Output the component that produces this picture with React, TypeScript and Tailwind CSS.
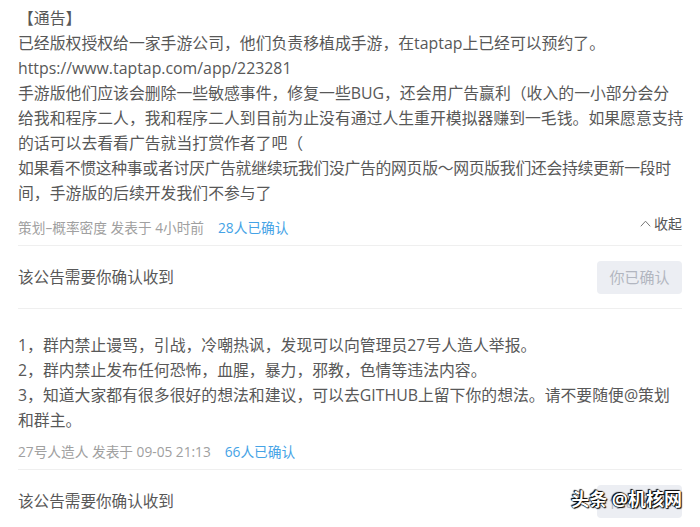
export default function App() {
  const font = { fontFamily: '"Open Sans", "Noto Sans CJK SC", sans-serif' };

  const notice1 = [
    '【通告】',
    '已经版权授权给一家手游公司，他们负责移植成手游，在taptap上已经可以预约了。',
    'https://www.taptap.com/app/223281',
    '手游版他们应该会删除一些敏感事件，修复一些BUG，还会用广告赢利（收入的一小部分会分',
    '给我和程序二人，我和程序二人到目前为止没有通过人生重开模拟器赚到一毛钱。如果愿意支持',
    '的话可以去看看广告就当打赏作者了吧（',
    '如果看不惯这种事或者讨厌广告就继续玩我们没广告的网页版～网页版我们还会持续更新一段时',
    '间，手游版的后续开发我们不参与了',
  ];

  const notice2 = [
    '1，群内禁止谩骂，引战，冷嘲热讽，发现可以向管理员27号人造人举报。',
    '2，群内禁止发布任何恐怖，血腥，暴力，邪教，色情等违法内容。',
    '3，知道大家都有很多很好的想法和建议，可以去GITHUB上留下你的想法。请不要随便@策划',
    '和群主。',
  ];

  return (
    <div className="relative w-[700px] h-[527px] overflow-hidden bg-white px-[18px]" style={font}>
      {/* first notice */}
      <div className="pt-[6px] text-[15.85px] leading-[25px] text-[#585858] whitespace-nowrap">
        {notice1.map((line, i) => (
          <div key={i} className={i === 6 ? 'tracking-[-0.3px]' : ''}>{line}</div>
        ))}
      </div>
      <div className="mt-[12px] h-[20px] flex items-center justify-between text-[13.7px]">
        <div className="flex items-center gap-[14px]">
          <span className="text-[#a0a0a0]">策划–概率密度 发表于 4小时前</span>
          <span className="text-[#45a3e6]">28人已确认</span>
        </div>
        <div className="flex items-center gap-[3px] text-[14px] text-[#555] -mt-[10px]">
          <svg width="11" height="7" viewBox="0 0 11 7" fill="none">
            <polyline points="0.8,6.3 5.5,1.2 10.2,6.3" stroke="#777" strokeWidth="1" />
          </svg>
          <span>收起</span>
        </div>
      </div>
      <div className="mt-[7px] border-t border-[#efefef]" />
      <div className="flex items-center justify-between pt-[15px] pb-[14px]">
        <span className="text-[15.6px] text-[#585858]">该公告需要你确认收到</span>
        <div className="w-[85px] h-[33px] rounded-[4px] bg-[#eceef3] flex items-center justify-center text-[15px] text-[#b2b6c0]">
          你已确认
        </div>
      </div>
      <div className="border-t border-[#efefef]" />

      {/* second notice */}
      <div className="pt-[24px] text-[15.85px] leading-[25px] text-[#585858] whitespace-nowrap">
        {notice2.map((line, i) => (
          <div key={i}>{line}</div>
        ))}
      </div>
      <div className="mt-[9px] h-[20px] flex items-center gap-[14px] text-[13.7px]">
        <span className="text-[#a0a0a0]">27号人造人 发表于 09-05 21:13</span>
        <span className="text-[#45a3e6]">66人已确认</span>
      </div>
      <div className="mt-[7px] border-t border-[#efefef]" />
      <div className="flex items-center justify-between pt-[15px] pb-[14px]">
        <span className="text-[15.6px] text-[#585858]">该公告需要你确认收到</span>
        <div className="w-[85px] h-[33px] rounded-[4px] bg-[#eceef3] flex items-center justify-center text-[15px] text-[#b2b6c0]">
          你已确认
        </div>
      </div>

      {/* watermark */}
      <div
        className="absolute right-[18px] top-[488px] text-[18px] leading-[22px] text-white font-bold"
        style={{ textShadow: '0 0 1px #000, 0 0 1px #000, 1px 1px 1px #000, -1px -1px 1px #000' }}
      >
        头条 @机核网
      </div>
    </div>
  );
}
